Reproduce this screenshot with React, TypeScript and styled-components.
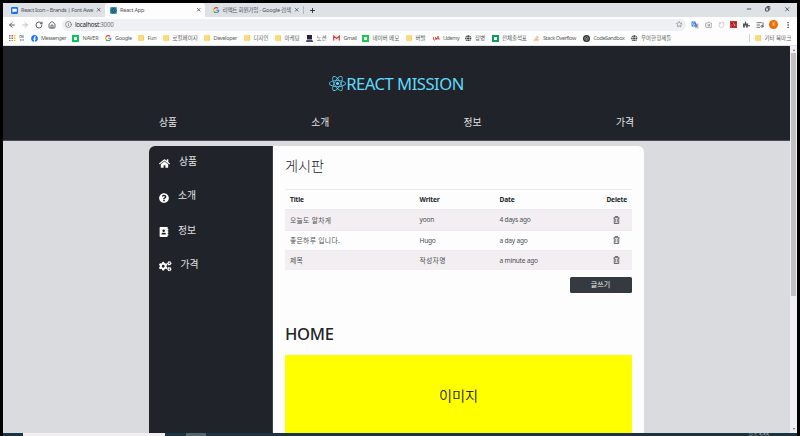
import React from "react";
import styled, { createGlobalStyle } from "styled-components";
import {
  FaReact, FaHome, FaQuestionCircle, FaAddressBook, FaCogs,
  FaFacebook, FaGlobe, FaStackOverflow, FaPuzzlePiece,
} from "react-icons/fa";
import {
  ArrowLeft, ArrowRight, RotateCw, Home, Info, Star, X, Plus, Minus, Copy,
  EllipsisVertical, ListMusic, Camera,
} from "lucide-react";

const GlobalStyle = createGlobalStyle`
  * { box-sizing: border-box; }
  body {
    margin: 0;
    background: #000;
    overflow: hidden;
    font-family: "Noto Sans", "Noto Sans CJK KR", sans-serif;
    color: #212529;
  }
  svg { display: block; flex: none; }
`;

const Screen = styled.div`
  width: 800px;
  height: 436px;
  padding: 3px 3px 0;
  background: #000;
  display: flex;
  flex-direction: column;
  overflow: hidden;
`;

/* ---------- browser chrome ---------- */
const TabStrip = styled.div`
  height: 14px;
  flex: none;
  display: flex;
  background: #dee1e6;
  white-space: nowrap;
`;
const Tab = styled.div<{ $width: number; $active?: boolean }>`
  width: ${(p) => p.$width}px;
  flex: none;
  display: flex;
  align-items: center;
  gap: 3px;
  padding: 0 4px 0 ${(p) => (p.$active ? 5 : 8)}px;
  border-radius: 3px 3px 0 0;
  background: ${(p) => (p.$active ? "#fdfdfd" : "transparent")};
  color: #50545a;
`;
const TabTitle = styled.span<{ $spacing: number }>`
  flex: 1;
  min-width: 0;
  font-size: 5.6px;
  line-height: 14px;
  letter-spacing: ${(p) => p.$spacing}px;
`;
const NewTab = styled.div`
  display: flex;
  align-items: center;
  margin: 3px 0;
  padding-left: 5px;
  border-left: 1px solid #b5b8bd;
`;
const WindowButtons = styled.div`
  display: flex;
  align-items: center;
  gap: 13px;
  margin-left: auto;
  padding: 0 7px 2px 0;
`;
const Toolbar = styled.div`
  height: 15px;
  flex: none;
  display: flex;
  align-items: center;
  padding-left: 5px;
  background: #fdfdfd;
  color: #54585d;
`;
const NavIcons = styled.div`
  display: flex;
  gap: 5.3px;
  width: 54px;
`;
const AddressBar = styled.div`
  width: 624px;
  height: 12px;
  border-radius: 6px;
  padding: 0 4px 0 3px;
  background: #eff0f3;
  display: flex;
  align-items: center;
  gap: 3px;
  font-size: 6.2px;
  letter-spacing: -0.25px;
  color: #777;
`;
const Host = styled.span`
  flex: 1;
  line-height: 12px;
  b { font-weight: 400; color: #222; }
`;
const Extensions = styled.div`
  display: flex;
  align-items: center;
  justify-content: space-between;
  width: 101px;
  margin-left: 5px;
`;
const Avatar = styled.span`
  width: 9px;
  height: 9px;
  border-radius: 50%;
  background: #ef6c00;
  color: #fff;
  font-size: 4.5px;
  line-height: 9px;
  text-align: center;
`;
const Bookmarks = styled.div`
  height: 14px;
  flex: none;
  display: flex;
  align-items: center;
  padding: 0 0 1px 6px;
  background: #fdfdfd;
  border-bottom: 1px solid #dfe0e3;
`;
const Bookmark = styled.div<{ $width: number; $spacing: number }>`
  width: ${(p) => p.$width}px;
  flex: none;
  display: flex;
  align-items: center;
  gap: 3.5px;
  color: #5b5e63;
  font-size: 5.5px;
  line-height: 12px;
  white-space: nowrap;
  letter-spacing: ${(p) => p.$spacing}px;
`;
const OtherBookmarks = styled(Bookmark)`
  margin-left: auto;
  padding-left: 5px;
  border-left: 1px solid #d5d6d8;
  line-height: 8px;
`;
const FolderShape = styled.span`
  width: 6px;
  height: 6px;
  border-radius: 1px;
  background: #fbdc7c;
  border-right: 1px solid #f3cf68;
`;
const Tile = styled.span<{ $color: string }>`
  width: 7px;
  height: 7px;
  background: ${(p) => p.$color};
  display: grid;
  place-items: center;
  &::after {
    content: "";
    width: 3px;
    height: 3px;
    background: #fff;
  }
`;

const GoogleLogo = () => (
  <svg width="6.5" height="6.5" viewBox="0 0 24 24" fill="none" strokeWidth="4.5">
    <path d="M19 5A9.5 9.5 0 0 0 4 7" stroke="#ea4335" />
    <path d="M4 7a9.500 9.500 0 0 0 0 10" stroke="#fbbc05" />
    <path d="M4 17a9.500 9.500 0 0 0 14 2" stroke="#34a853" />
    <path d="M18 19a9.500 9.500 0 0 0 3.500-7H12" stroke="#4285f4" />
  </svg>
);
const AppsLogo = () => (
  <svg width="6.5" height="6.5" viewBox="0 0 13 13">
    {["#ea4335", "#ea4335", "#fbbc05", "#34a853", "#4285f4", "#fbbc05", "#34a853", "#ea8b35", "#fbbc05"].map((c, i) => (
      <rect key={i} x={(i % 3) * 5} y={Math.floor(i / 3) * 5} width="3" height="3" fill={c} />
    ))}
  </svg>
);
const GmailLogo = () => (
  <svg width="7" height="6" viewBox="0 0 14 12">
    <path d="M0 1h14v10H0z" fill="#f4eeee" />
    <path d="M1.300 11V2L7 7l5.700-5v9" fill="none" stroke="#d5473c" strokeWidth="2.400" />
  </svg>
);
const NotionLogo = () => (
  <svg width="7" height="7" viewBox="0 0 14 14">
    <path d="M2 0h10v9H2z" fill="#25242f" />
    <path d="M1 10h12l1 4H0z" fill="#55468c" />
  </svg>
);
const UdemyLogo = () => (
  <svg width="6.500" height="6" viewBox="0 0 13 12" fill="none" stroke="#e2574f" strokeWidth="2">
    <path d="M1 4v4c0 3 4 3 4 0V4M7 10l3-8 2 8M6 7h7" />
  </svg>
);
const SandboxLogo = () => (
  <svg width="7" height="7" viewBox="0 0 14 14">
    <circle cx="7" cy="7" r="7" fill="#2c2e31" />
    <path d="M7 3l3.500 2v4L7 11 3.500 9V5zM3.500 5L7 7l3.500-2M7 7v4" fill="none" stroke="#c5c7c9" />
  </svg>
);
const TranslateLogo = () => (
  <svg width="8" height="8" viewBox="0 0 16 16">
    <path d="M6 5h9v10H8z" fill="#c7cbd1" />
    <path d="M1 1h8l3 10H1z" fill="#3f7ee8" />
    <path d="M7 4.500A2.500 2.500 0 1 0 7.500 7H5" fill="none" stroke="#fff" strokeWidth="1.200" />
    <path d="M9 8h5M11.500 7v1c0 2-1 4-2 5M10 9l4 4" fill="none" stroke="#617389" />
  </svg>
);
const FaintLogo = () => (
  <svg width="7" height="7" viewBox="0 0 14 14" fill="none" stroke="#c4c5c8" strokeWidth="1.500">
    <circle cx="7" cy="8" r="5" /><path d="M2 2l4 5M9 1l3 3" />
  </svg>
);
const RedLogo = () => (
  <svg width="7" height="7" viewBox="0 0 14 14">
    <path d="M0 0h14v14H0z" fill="#d03433" />
    <path d="M2 4l4 1 1 4-3 3M9 2l3 3-2 2M9 10l3 2" fill="none" stroke="#5f1c22" strokeWidth="1.600" />
    <path d="M7 5l3 5" stroke="#f0d5d5" strokeWidth="1.500" />
  </svg>
);
const FlagLogo = () => (
  <svg width="7" height="7" viewBox="0 0 14 14">
    <rect width="14" height="14" rx="2" fill="#1a73e8" />
    <path d="M3 3v8M4 4h7v5H4z" fill="#fff" stroke="#fff" />
  </svg>
);
const ReactTabLogo = () => (
  <svg width="7" height="7" viewBox="0 0 14 14" fill="none" stroke="#1b3a48">
    <rect width="14" height="14" rx="2" fill="#42a5c5" stroke="none" />
    <ellipse cx="7" cy="7" rx="6" ry="2.400" />
    <ellipse cx="7" cy="7" rx="6" ry="2.400" transform="rotate(60 7 7)" />
    <ellipse cx="7" cy="7" rx="6" ry="2.400" transform="rotate(120 7 7)" />
  </svg>
);

const folder = <FolderShape />;
const globe = <FaGlobe size={6.5} color="#46494e" />;
const bookmarks: { icon: React.ReactNode; label: string; width: number; spacing: number }[] = [
  { icon: <AppsLogo />, label: "앱", width: 21.5, spacing: 0 },
  { icon: <FaFacebook size={7} color="#1877f2" />, label: "Messenger", width: 41.5, spacing: -0.4 },
  { icon: <Tile $color="#03c75a" />, label: "NAVER", width: 33, spacing: -0.3 },
  { icon: <GoogleLogo />, label: "Google", width: 33, spacing: -0.3 },
  { icon: folder, label: "Fun", width: 25, spacing: -0.3 },
  { icon: folder, label: "로컬페이지", width: 41, spacing: 0 },
  { icon: folder, label: "Developer", width: 40, spacing: -0.32 },
  { icon: folder, label: "디자인", width: 31, spacing: -0.1 },
  { icon: folder, label: "마케팅", width: 31, spacing: -0.1 },
  { icon: <NotionLogo />, label: "노션", width: 27, spacing: 0 },
  { icon: <GmailLogo />, label: "Gmail", width: 29, spacing: -0.4 },
  { icon: <Tile $color="#1ec94c" />, label: "네이버 메모", width: 44, spacing: 0 },
  { icon: folder, label: "버벌", width: 27, spacing: 0 },
  { icon: <UdemyLogo />, label: "Udemy", width: 32, spacing: -0.4 },
  { icon: globe, label: "장병", width: 26.5, spacing: 0 },
  { icon: <Tile $color="#109d58" />, label: "전체출석표", width: 41.5, spacing: -0.1 },
  { icon: <FaStackOverflow size={6.5} color="#e9985b" />, label: "Stack Overflow", width: 50, spacing: -0.4 },
  { icon: <SandboxLogo />, label: "CodeSandbox", width: 48, spacing: -0.42 },
  { icon: globe, label: "우아한형제들", width: 45, spacing: 0 },
];

/* ---------- web page ---------- */
const Viewport = styled.div`
  height: 387px;
  flex: none;
  display: flex;
  overflow: hidden;
`;
const Page = styled.div`
  width: 787px;
  background: #dadbdf;
  overflow: hidden;
`;
const Header = styled.header`
  height: 95px;
  padding-top: 24px;
  background: #20232a;
  border-bottom: 1px solid #4b4b51;
  color: #fff;
`;
const Brand = styled.h1`
  margin: 0;
  display: flex;
  align-items: center;
  justify-content: center;
  height: 26px;
  color: #61dafb;
  font-size: 16.6px;
  font-weight: 400;
  letter-spacing: -0.48px;
`;
const TopNav = styled.nav`
  display: grid;
  grid-template-columns: repeat(4, 152.3px);
  padding: 18px 0 0 156px;
  font-size: 9.8px;
  line-height: 18px;
  color: #e4e4e6;
`;
const Card = styled.main`
  display: flex;
  width: 495px;
  height: 320px;
  margin: 4.500px 0 0 146px;
  border-radius: 6px;
  background: #fdfdfd;
  overflow: hidden;
`;
const SideNav = styled.nav`
  width: 124px;
  flex: none;
  padding: 0 10px;
  background: #20232a;
  border-right: 1px solid #3a3e45;
  color: #fff;
`;
const SideLink = styled.a`
  display: flex;
  align-items: center;
  height: 34.3px;
  padding-bottom: 1px;
  gap: 9px;
  font-size: 9.8px;
  line-height: 18px;
  svg { margin-top: 3px; }
  span { color: #e4e4e6; }
`;
const Content = styled.section`
  width: 359px;
  padding: 7px 0 0 12px;
`;
const BoardTitle = styled.h2`
  margin: 0 0 10px;
  font-size: 14.2px;
  line-height: 26px;
  font-weight: 300;
`;
const Row = styled.div<{ $striped?: boolean; $head?: boolean; $height: number }>`
  display: grid;
  grid-template-columns: 129.5px 80px 1fr 31px;
  align-items: center;
  height: ${(p) => p.$height}px;
  padding-left: 5px;
  border-top: 1px solid #e9ebee;
  background: ${(p) => (p.$striped ? "#f2eef1" : "transparent")};
  color: ${(p) => (p.$head ? "#212529" : "#4c4f54")};
  font-size: 6.6px;
  font-weight: ${(p) => (p.$head ? 700 : 400)};
  letter-spacing: -0.15px;
  svg { justify-self: center; color: #3e4146; }
`;
const Cell = styled.span<{ $korean?: boolean }>`
  font-size: ${(p) => (p.$korean ? 6.8 : 6.6)}px;
  letter-spacing: ${(p) => (p.$korean ? 0.3 : -0.22)}px;
`;
const DeleteHead = styled.span`
  justify-self: end;
  margin-right: 5px;
`;
const WriteButton = styled.button`
  display: block;
  width: 62px;
  height: 16px;
  margin: 7px 0 0 284.5px;
  padding: 0;
  border: 0;
  border-radius: 1.5px;
  background: #343a40;
  color: #f1f1f2;
  font: 400 7px/15px "Noto Sans CJK KR", sans-serif;
`;
const HomeTitle = styled.h2`
  margin: 29.500px 0 9px;
  font-size: 16.6px;
  line-height: 24px;
  font-weight: 500;
  letter-spacing: -0.3px;
`;
const Banner = styled.div`
  height: 100px;
  padding-top: 28px;
  background: #ff0;
  text-align: center;
  font-size: 14.2px;
  line-height: 26px;
  font-weight: 350;
`;
const Scrollbar = styled.div`
  width: 7px;
  display: flex;
  flex-direction: column;
  align-items: center;
  justify-content: space-between;
  background: #f1eff1;
`;
const Arrow = styled.i<{ $down?: boolean }>`
  margin: 3px 0 ${(p) => (p.$down ? 3 : 2)}px;
  border: 1.5px solid transparent;
  border-${(p) => (p.$down ? "top" : "bottom")}: 2px solid #66676b;
  border-${(p) => (p.$down ? "bottom" : "top")}-width: 0;
`;
const Thumb = styled.div`
  width: 5px;
  height: 243px;
  margin-bottom: auto;
  background: #c1c0c3;
`;

/* ---------- desktop taskbar ---------- */
const Taskbar = styled.div`
  height: 4px;
  flex: none;
  display: flex;
  background: #1c3440;
  overflow: hidden;
`;
const SearchBox = styled.div`
  width: 142px;
  margin-left: 20px;
  background: #f1eff1;
`;
const TaskItem = styled.div`
  width: 20px;
  margin-left: 21px;
  background: #50666c;
`;
const Clock = styled.div`
  margin: 0 28px 0 auto;
  color: #aab7bd;
  font-size: 5px;
  line-height: 5px;
`;

const posts = [
  { title: "오늘도 알차게", writer: "yoon", date: "4 days ago", height: 21 },
  { title: "좋은하루 입니다.", writer: "Hugo", date: "a day ago", height: 20 },
  { title: "제목", writer: "작성자명", date: "a minute ago", height: 20 },
];

const isKorean = (text: string) => /[가-힣]/.test(text);

const TrashIcon = () => (
  <svg width="7" height="8" viewBox="0 0 14 16" fill="none" stroke="currentColor" strokeWidth="1.500">
    <path d="M1 3.500h12M4.500 3V1h5v2M2.500 4v11h9V4" />
    <path d="M5.300 6v7M8.700 6v7" strokeWidth="1.200" />
  </svg>
);

export default function App() {
  return (
    <>
      <GlobalStyle />
      <Screen>
        <TabStrip>
          <Tab $width={102}>
            <FlagLogo />
            <TabTitle $spacing={-0.33}>React Icon – Brands | Font Awe</TabTitle>
            <X size={5.5} strokeWidth={3.5} />
          </Tab>
          <Tab $width={100} $active>
            <ReactTabLogo />
            <TabTitle $spacing={-0.25}>React App</TabTitle>
            <X size={5.5} strokeWidth={3.5} />
          </Tab>
          <Tab $width={98}>
            <GoogleLogo />
            <TabTitle $spacing={-0.22}>리액트 회원가입 - Google 검색</TabTitle>
            <X size={5.5} strokeWidth={3.5} />
          </Tab>
          <NewTab><Plus size={7} strokeWidth={3} /></NewTab>
          <WindowButtons>
            <Minus size={6} strokeWidth={3} />
            <Copy size={5.5} strokeWidth={3.5} transform="scale(-1 1)" />
            <X size={6.5} strokeWidth={2.5} />
          </WindowButtons>
        </TabStrip>
        <Toolbar>
          <NavIcons>
            <ArrowLeft size={8} strokeWidth={2.8} />
            <ArrowRight size={8} strokeWidth={2.2} color="#aaa" />
            <RotateCw size={8} strokeWidth={2.8} />
            <Home size={8} strokeWidth={2.8} />
          </NavIcons>
          <AddressBar>
            <Info size={7} strokeWidth={2.5} />
            <Host><b>localhost</b>:3000</Host>
            <Star size={6.5} strokeWidth={2.5} />
          </AddressBar>
          <Extensions>
            <TranslateLogo />
            <Camera size={7.5} strokeWidth={2.4} color="#888" />
            <FaintLogo />
            <RedLogo />
            <FaPuzzlePiece size={7} />
            <ListMusic size={8} strokeWidth={2.5} />
            <Avatar>K</Avatar>
            <EllipsisVertical size={8} strokeWidth={2.5} />
          </Extensions>
        </Toolbar>
        <Bookmarks>
          {bookmarks.map((b) => (
            <Bookmark key={b.label} $width={b.width} $spacing={b.spacing}>
              {b.icon}
              {b.label}
            </Bookmark>
          ))}
          <OtherBookmarks $width={48} $spacing={0}>{folder}기타 북마크</OtherBookmarks>
        </Bookmarks>
        <Viewport>
          <Page>
            <Header>
              <Brand><FaReact size={17} />REACT MISSION</Brand>
              <TopNav>
                <span>상품</span><span>소개</span><span>정보</span><span>가격</span>
              </TopNav>
            </Header>
            <Card>
              <SideNav>
                <SideLink><FaHome size={11} /><span>상품</span></SideLink>
                <SideLink><FaQuestionCircle size={10} /><span>소개</span></SideLink>
                <SideLink><FaAddressBook size={10} /><span>정보</span></SideLink>
                <SideLink><FaCogs size={12.5} /><span>가격</span></SideLink>
              </SideNav>
              <Content>
                <BoardTitle>게시판</BoardTitle>
                <Row $head $height={20}>
                  <span>Title</span><span>Writer</span><span>Date</span>
                  <DeleteHead>Delete</DeleteHead>
                </Row>
                {posts.map((p, i) => (
                  <Row key={p.title} $striped={i % 2 === 0} $height={p.height}>
                    {[p.title, p.writer, p.date].map((text) => (
                      <Cell key={text} $korean={isKorean(text)}>{text}</Cell>
                    ))}
                    <TrashIcon />
                  </Row>
                ))}
                <WriteButton>글쓰기</WriteButton>
                <HomeTitle>HOME</HomeTitle>
                <Banner>이미지</Banner>
              </Content>
            </Card>
          </Page>
          <Scrollbar><Arrow /><Thumb /><Arrow $down /></Scrollbar>
        </Viewport>
        <Taskbar><SearchBox /><TaskItem /><Clock>오후 5:55</Clock></Taskbar>
      </Screen>
    </>
  );
}
